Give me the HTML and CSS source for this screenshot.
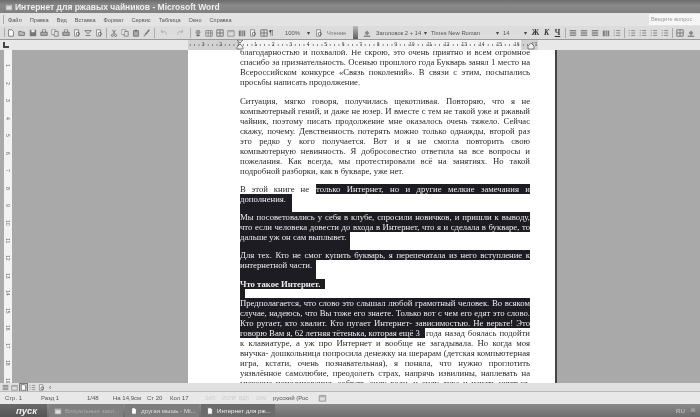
FILE: index.html
```html
<!DOCTYPE html>
<html lang="ru">
<head>
<meta charset="utf-8">
<title>Интернет для ржавых чайников - Microsoft Word</title>
<link rel="stylesheet" href="styles.css">
</head>
<body>

<svg class="defs" width="0" height="0">
  <symbol id="i-new" viewBox="0 0 10 10"><path d="M2 1h4l2 2v6H2z" fill="#fff" stroke="#666"/></symbol>
  <symbol id="i-open" viewBox="0 0 10 10"><path d="M1 8V3h3l1 1h3v4z" fill="#bbb" stroke="#666"/></symbol>
  <symbol id="i-save" viewBox="0 0 10 10"><path d="M1 1h8v8H1z" fill="#777"/><path d="M3 1h4v3H3z" fill="#eee"/></symbol>
  <symbol id="i-print" viewBox="0 0 10 10"><path d="M3 1h4v3H3z" fill="#fff" stroke="#777"/><path d="M1 4h8v4H1z" fill="#aaa" stroke="#666"/></symbol>
  <symbol id="i-view" viewBox="0 0 10 10"><path d="M2 1h5v8H2z" fill="#fff" stroke="#777"/><circle cx="6" cy="6" r="2" fill="none" stroke="#555"/></symbol>
  <symbol id="i-spell" viewBox="0 0 10 10"><path d="M1 2h8L5 6z" fill="none" stroke="#666"/><path d="M2 8h6" stroke="#666"/></symbol>
  <symbol id="i-cut" viewBox="0 0 10 10"><path d="M3 1l3 5M7 1L4 6" stroke="#666" fill="none"/><circle cx="3" cy="8" r="1.3" fill="none" stroke="#666"/><circle cx="7" cy="8" r="1.3" fill="none" stroke="#666"/></symbol>
  <symbol id="i-copy" viewBox="0 0 10 10"><path d="M1 1h5v6H1z" fill="#fff" stroke="#888"/><path d="M4 3h5v6H4z" fill="#ddd" stroke="#777"/></symbol>
  <symbol id="i-paste" viewBox="0 0 10 10"><path d="M2 2h6v7H2z" fill="#aaa" stroke="#666"/><path d="M4 1h2v2H4z" fill="#666"/></symbol>
  <symbol id="i-brush" viewBox="0 0 10 10"><path d="M8 1L3 7" stroke="#777" stroke-width="2"/><path d="M1 9l2-2" stroke="#999" stroke-width="2"/></symbol>
  <symbol id="i-undo" viewBox="0 0 10 10"><path d="M8 7C8 3 5 2 2 4M2 1v3h3" fill="none" stroke="#aaa"/></symbol>
  <symbol id="i-redo" viewBox="0 0 10 10"><path d="M2 7c0-4 3-5 6-3M8 1v3H5" fill="none" stroke="#aaa"/></symbol>
  <symbol id="i-link" viewBox="0 0 10 10"><circle cx="5" cy="4" r="3" fill="#999"/><path d="M3 8h4" stroke="#666" stroke-width="2"/></symbol>
  <symbol id="i-table" viewBox="0 0 10 10"><path d="M1 2h8v7H1zM1 5h8M4 2v7M7 2v7" fill="#eee" stroke="#777"/></symbol>
  <symbol id="i-cols" viewBox="0 0 10 10"><path d="M1 2h8v7H1z" fill="#777"/><path d="M4 2v7M6.500 2v7" stroke="#ddd"/></symbol>
  <symbol id="i-lines" viewBox="0 0 10 10"><path d="M1 2h8M1 4h8M1 6h8M1 8h8" stroke="#666"/></symbol>
  <symbol id="i-list" viewBox="0 0 10 10"><path d="M1 2h1M1 5h1M1 8h1" stroke="#555"/><path d="M4 2h5M4 5h5M4 8h5" stroke="#777"/></symbol>
  <symbol id="i-box" viewBox="0 0 10 10"><path d="M1 1h8v8H1zM1 5h8M5 1v8" fill="none" stroke="#666"/></symbol>
  <symbol id="i-fill" viewBox="0 0 10 10"><path d="M2 5l3-3 3 3-3 3z" fill="#888"/><path d="M1 9h8" stroke="#444"/></symbol>
  <symbol id="i-win" viewBox="0 0 10 10"><path d="M1 2h8v7H1z" fill="#ddd" stroke="#888"/><path d="M2 3h6v1H2z" fill="#999"/></symbol>
  <symbol id="i-indent" viewBox="0 0 8 10"><path d="M1 0l3 3 3-3zM4 4L1 7v2h6V7z" fill="#eee" stroke="#555" stroke-width=".7"/></symbol>
  <symbol id="i-rindent" viewBox="0 0 8 10"><path d="M4 3L1 6v3h6V6z" fill="#eee" stroke="#555" stroke-width=".7"/></symbol>
</svg>

<div class="app">

  <div class="titlebar">
    <svg class="tb-icon"><use href="#i-win"/></svg>
    <span>Интернет для ржавых чайников - Microsoft Word</span>
  </div>

  <div class="menubar">
    <div class="grip"></div>
    <span>Файл</span><span>Правка</span><span>Вид</span><span>Вставка</span><span>Формат</span><span>Сервис</span><span>Таблица</span><span>Окно</span><span>Справка</span>
    <div class="ask">Введите вопрос</div>
  </div>

  <div class="toolbar">
    <div class="grip"></div>
    <svg class="ic"><use href="#i-new"/></svg>
    <svg class="ic"><use href="#i-open"/></svg>
    <svg class="ic"><use href="#i-save"/></svg>
    <svg class="ic"><use href="#i-print"/></svg>
    <svg class="ic"><use href="#i-copy"/></svg>
    <svg class="ic"><use href="#i-print"/></svg>
    <svg class="ic"><use href="#i-view"/></svg>
    <svg class="ic"><use href="#i-spell"/></svg>
    <svg class="ic"><use href="#i-view"/></svg>
    <i class="sep"></i>
    <svg class="ic"><use href="#i-cut"/></svg>
    <svg class="ic"><use href="#i-copy"/></svg>
    <svg class="ic"><use href="#i-paste"/></svg>
    <svg class="ic"><use href="#i-brush"/></svg>
    <i class="sep"></i>
    <svg class="ic wide"><use href="#i-undo"/></svg>
    <svg class="ic wide"><use href="#i-redo"/></svg>
    <i class="sep"></i>
    <svg class="ic"><use href="#i-link"/></svg>
    <svg class="ic"><use href="#i-table"/></svg>
    <svg class="ic"><use href="#i-box"/></svg>
    <svg class="ic"><use href="#i-win"/></svg>
    <svg class="ic"><use href="#i-cols"/></svg>
    <svg class="ic"><use href="#i-view"/></svg>
    <svg class="ic"><use href="#i-box"/></svg>
    <span class="mark">¶</span>
    <span class="combo zoom">100%</span>
    <span class="arrow">▾</span>
    <svg class="ic"><use href="#i-view"/></svg>
    <span class="read">Чтение</span>
    <div class="handle"></div>
    <svg class="ic"><use href="#i-fill"/></svg>
    <span class="combo style">Заголовок 2 + 14</span>
    <span class="arrow">▾</span>
    <span class="combo font">Times New Roman</span>
    <span class="arrow">▾</span>
    <span class="combo size">14</span>
    <span class="arrow">▾</span>
    <b class="fmt">Ж</b><b class="fmt it">К</b><b class="fmt un">Ч</b>
    <i class="sep"></i>
    <svg class="ic"><use href="#i-lines"/></svg>
    <svg class="ic"><use href="#i-lines"/></svg>
    <svg class="ic"><use href="#i-lines"/></svg>
    <svg class="ic"><use href="#i-cols"/></svg>
    <svg class="ic"><use href="#i-list"/></svg>
    <i class="sep"></i>
    <svg class="ic"><use href="#i-list"/></svg>
    <svg class="ic"><use href="#i-list"/></svg>
    <svg class="ic"><use href="#i-list"/></svg>
    <svg class="ic"><use href="#i-list"/></svg>
    <i class="sep"></i>
    <svg class="ic"><use href="#i-box"/></svg>
    <svg class="ic"><use href="#i-fill"/></svg>
  </div>

  <div class="hruler-row">
    <div class="corner"></div>
    <div class="hruler">
      <span>3</span><span>2</span><span>1</span><span class="on">1</span><span class="on">2</span><span class="on">3</span><span class="on">4</span><span class="on">5</span><span class="on">6</span><span class="on">7</span><span class="on">8</span><span class="on">9</span><span class="on">10</span><span class="on">11</span><span class="on">12</span><span class="on">13</span><span class="on">14</span><span class="on">15</span><span class="on">16</span><span>17</span>
      <svg class="indent left"><use href="#i-indent"/></svg>
      <svg class="indent right"><use href="#i-rindent"/></svg>
    </div>
  </div>

  <div class="workspace">
    <div class="vruler">
      <span>1</span><span>2</span><span>3</span><span>4</span><span>5</span><span>6</span><span>7</span><span>8</span><span>9</span><span>10</span><span>11</span><span>12</span><span>13</span><span>14</span><span>15</span><span>16</span><span>17</span><span>18</span><span>19</span>
    </div>
    <div class="page">
      <div class="text">
        <div class="ln"><span class="j">благодарностью и похвалой. Не скрою, это очень приятно и всем огромное</span></div>
        <div class="ln"><span class="j">спасибо за признательность. Осенью прошлого года Букварь занял 1 место на</span></div>
        <div class="ln"><span class="j">Всероссийском конкурсе «Связь поколений». В связи с этим, посыпались</span></div>
        <div class="ln end wide"><span>просьбы написать продолжение.</span></div>

        <div class="ln"><span class="j">Ситуация, мягко говоря, получилась щекотливая. Повторяю, что я не</span></div>
        <div class="ln"><span class="j">компьютерный гений, и даже не юзер. И вместе с тем не такой уже и ржавый</span></div>
        <div class="ln"><span class="j">чайник, поэтому писать продолжение мне оказалось очень тяжело. Сейчас</span></div>
        <div class="ln"><span class="j">скажу, почему. Девственность потерять можно только однажды, второй раз</span></div>
        <div class="ln"><span class="j">это редко у кого получается. Вот и я не смогла повторить свою</span></div>
        <div class="ln"><span class="j">компьютерную невинность. Я добросовестно ответила на все вопросы и</span></div>
        <div class="ln"><span class="j">пожелания. Как всегда, мы протестировали всё на занятиях. Но такой</span></div>
        <div class="ln end"><span>подробной разборки, как в букваре, уже нет.</span></div>

        <div class="ln"><span class="j intro">В этой книге не</span><span class="j sel">только Интернет, но и другие мелкие замечания и</span></div>
        <div class="ln end"><span class="sel w-a">дополнения.</span></div>

        <div class="ln"><span class="j sel">Мы посоветовались у себя в клубе, спросили новичков, и пришли к выводу,</span></div>
        <div class="ln"><span class="j sel">что если человека довести до входа в Интернет, что я и сделала в букваре, то</span></div>
        <div class="ln end"><span class="sel w-b">дальше уж он сам выплывет.</span></div>

        <div class="ln"><span class="j sel">Для тех. Кто не смог купить букварь, я перепечатала из него вступление к</span></div>
        <div class="ln end wide"><span class="sel w-c">интернетной части.</span></div>

        <div class="ln"><strong class="sel w-d">Что такое Интернет.</strong></div>
        <div class="ln gap"><span class="sel w-e"></span></div>

        <div class="ln"><span class="j sel">Предполагается, что слово это слышал любой грамотный человек. Во всяком</span></div>
        <div class="ln"><span class="j sel">случае, надеюсь, что Вы тоже его знаете. Только вот с чем его едят это слово.</span></div>
        <div class="ln"><span class="j sel">Кто ругает, кто хвалит. Кто пугает Интернет- зависимостью. Не верьте! Это</span></div>
        <div class="ln"><span class="sel w-f">говорю Вам я, 62 летняя тётенька, которая ещё 3</span><span class="j tail">года назад боялась подойти</span></div>
        <div class="ln"><span class="j">к клавиатуре, а уж про Интернет и вообще не загадывала. Но когда моя</span></div>
        <div class="ln"><span class="j">внучка- дошкольница попросила денежку на шерарам (детская компьютерная</span></div>
        <div class="ln"><span class="j">игра, кстати, очень познавательная), я поняла, что нужно проглотить</span></div>
        <div class="ln"><span class="j">уязвлённое самолюбие, преодолеть страх, напрячь извилины, наплевать на</span></div>
        <div class="ln"><span class="j">мужские поползновения, собрать силу воли, и силу духа и начать учиться.</span></div>
      </div>
    </div>
  </div>

  <div class="viewbar">
    <svg class="vw"><use href="#i-lines"/></svg>
    <svg class="vw"><use href="#i-win"/></svg>
    <svg class="vw on"><use href="#i-new"/></svg>
    <svg class="vw"><use href="#i-list"/></svg>
    <svg class="vw"><use href="#i-view"/></svg>
    <span class="hscroll">‹</span>
  </div>

  <div class="statusbar">
    <span class="s1">Стр. 1</span>
    <span class="s2">Разд 1</span>
    <span class="s3">1/48</span>
    <span class="s4">На 14,9см</span>
    <span class="s5">Ст 20</span>
    <span class="s6">Кол 17</span>
    <span class="s7">ЗАП</span><span class="s7">ИСПР</span><span class="s7">ВДЛ</span><span class="s7">ЗАМ</span>
    <span class="s8">русский (Рос</span>
    <svg class="book"><use href="#i-win"/></svg>
  </div>

  <div class="taskbar">
    <div class="start">пуск</div>
    <div class="task dim"><svg class="tk"><use href="#i-win"/></svg><span>Визуальные закл...</span></div>
    <div class="task"><svg class="tk"><use href="#i-new"/></svg><span>другая мышь - Mi...</span></div>
    <div class="task cur"><svg class="tk"><use href="#i-new"/></svg><span>Интернет для рж...</span></div>
    <div class="tray"><span>RU</span><svg class="tk"><use href="#i-link"/></svg></div>
  </div>

</div>

</body>
</html>
```

FILE: styles.css
```css
html, body {
  margin: 0;
  padding: 0;
  background: #777;
}

.defs {
  position: absolute;
}

.app {
  width: 700px;
  height: 417px;
  overflow: hidden;
  display: flex;
  flex-direction: column;
  font-family: "Liberation Sans", Arial, sans-serif;
  color: #555;
  filter: blur(0.45px);
}

/* title */
.titlebar {
  height: 13px;
  flex: none;
  display: flex;
  align-items: center;
  gap: 2px;
  padding-left: 5px;
  background: linear-gradient(#6c6c6c, #8a8a8a 40%, #7f7f7f);
  color: #eee;
  font-weight: bold;
  font-size: 8.5px;
}
.tb-icon {
  width: 8px;
  height: 8px;
}

/* menu */
.menubar {
  height: 13px;
  flex: none;
  display: flex;
  align-items: center;
  gap: 8px;
  padding-left: 3px;
  background: #e3e3e3;
  font-size: 5.6px;
}
.menubar .grip {
  margin-right: -4px;
}
.grip {
  width: 1px;
  height: 9px;
  background: #aaa;
}
.ask {
  margin-left: auto;
  width: 49px;
  height: 11px;
  padding-left: 2px;
  background: #f6f6f6;
  color: #999;
  line-height: 11px;
}

/* toolbar */
.toolbar {
  height: 14px;
  flex: none;
  display: flex;
  align-items: center;
  padding-left: 4px;
  background: #dcdcdc;
  border-bottom: 1px solid #999;
  box-sizing: border-box;
  font-size: 5.800px;
  white-space: nowrap;
  overflow: hidden;
}
.ic {
  width: 8px;
  height: 8px;
  margin: 0 1.5px;
  flex: none;
}
.ic.wide {
  margin: 0 4px;
}
.sep {
  width: 1px;
  height: 10px;
  margin: 0 1.5px;
  background: #aaa;
  flex: none;
}
.mark {
  width: 11px;
  font-size: 8px;
  color: #444;
  flex: none;
}
.combo {
  color: #555;
  flex: none;
}
.zoom { width: 22px; margin-left: 5px; }
.style { width: 48px; margin-left: 4px; }
.font { width: 65px; margin-left: 1px; }
.size { width: 21px; margin-left: 1px; }
.arrow {
  width: 6px;
  color: #444;
  flex: none;
}
.read {
  width: 24px;
  margin-left: 3px;
  color: #777;
  flex: none;
}
.handle {
  width: 5px;
  height: 14px;
  margin: 0 3px 0 2px;
  background: linear-gradient(#bbb, #555);
  flex: none;
}
.fmt {
  width: 11px;
  flex: none;
  text-align: center;
  font-family: "Liberation Serif", serif;
  font-size: 7.5px;
  color: #333;
}
.it { font-style: italic; }
.un { text-decoration: underline; }

/* rulers */
.hruler-row {
  height: 10px;
  flex: none;
  display: flex;
  background: #e8e8e8;
}
.corner {
  width: 6px;
  height: 6px;
  margin: 2px 0 0 3px;
  border-left: 2px solid #444;
  border-bottom: 2px solid #444;
  box-sizing: border-box;
}
.hruler {
  position: relative;
  margin-left: 179px;
  display: flex;
  font-size: 5px;
  line-height: 9px;
  color: #555;
  background: #d2d2d2;
}
.hruler span {
  width: 17.5px;
  text-align: right;
  padding-right: 1px;
  box-sizing: border-box;
  background: radial-gradient(circle, #777 0.5px, transparent 1px) 0 50% / 4.4px 4px repeat-x;
}
.hruler .on {
  background-color: #f4f4f4;
}
.indent {
  position: absolute;
  top: 0;
  width: 8px;
  height: 10px;
}
.indent.left { left: 48px; }
.indent.right { left: 339px; }

.workspace {
  flex: 1;
  min-height: 0;
  display: flex;
  background: #a9a9a9;
  overflow: hidden;
}
.vruler {
  width: 8px;
  margin: 0 176px 0 4px;
  flex: none;
  display: flex;
  flex-direction: column;
  padding-top: 7px;
  background: #f2f2f2;
  font-size: 5px;
  color: #666;
  overflow: hidden;
}
.vruler span {
  height: 17.5px;
  flex: none;
  display: flex;
  align-items: center;
  justify-content: center;
  writing-mode: vertical-rl;
}

/* page */
.page {
  width: 367px;
  flex: none;
  background: #fff;
  border-right: 2px solid #444;
  overflow: hidden;
}
.text {
  margin: -3px 0 0 52px;
  width: 290px;
  font-family: "Liberation Serif", "Times New Roman", serif;
  font-size: 8.7px;
  line-height: 10px;
  color: #2a2a2a;
}
.ln {
  display: flex;
  min-height: 10px;
  white-space: nowrap;
}
.end { min-height: 18px; }
.end.wide { min-height: 19px; }
.gap { min-height: 9px; }
.j {
  flex: 1;
  min-width: 0;
  white-space: normal;
  text-align: justify;
  text-align-last: justify;
}
.sel {
  background: #1c1c22;
  color: #eee;
}
.intro { flex: none; width: 76px; padding-right: 7px; box-sizing: border-box; }
.tail { padding-left: 1px; }
.w-a { width: 52px; }
.w-b { width: 110px; }
.w-c { width: 76px; }
.w-d { width: 85px; }
.w-e { width: 5px; }
.w-f { width: 185px; }

/* bottom bars */
.viewbar {
  height: 8px;
  flex: none;
  display: flex;
  align-items: center;
  gap: 2px;
  padding-left: 2px;
  background: #e0e0e0;
  font-size: 7px;
}
.vw {
  width: 7px;
  height: 7px;
}
.vw.on {
  background: #bbb;
  outline: 1px solid #777;
}
.hscroll {
  margin-left: 2px;
}
.statusbar {
  height: 13px;
  flex: none;
  display: flex;
  align-items: center;
  padding-left: 5px;
  background: #e8e8e8;
  border-top: 1px solid #bbb;
  box-sizing: border-box;
  font-size: 6px;
  white-space: nowrap;
}
.statusbar span { flex: none; }
.s1 { width: 36px; }
.s2 { width: 46px; }
.s3 { width: 26px; }
.s4 { width: 34px; }
.s5 { width: 23px; }
.s6 { width: 35px; }
.s7 { width: 17px; color: #ccc; font-size: 5px; }
.s8 { width: 45px; }
.book { width: 9px; height: 8px; }

.taskbar {
  height: 13px;
  flex: none;
  display: flex;
  align-items: stretch;
  gap: 2px;
  background: linear-gradient(#8a8a8a, #6e6e6e);
  font-size: 6.2px;
  color: #ddd;
  white-space: nowrap;
}
.start {
  width: 47px;
  box-sizing: border-box;
  padding-left: 16px;
  background: linear-gradient(#6a6a6a, #555);
  color: #eee;
  font-size: 9.5px;
  font-weight: bold;
  font-style: italic;
  line-height: 13px;
}
.task {
  width: 74px;
  display: flex;
  align-items: center;
  gap: 3px;
  padding-left: 5px;
  box-sizing: border-box;
  background: #7c7c7c;
}
.task.dim {
  color: #aaa;
  background: #808080;
}
.task.cur {
  background: #6c6c6c;
  color: #eee;
}
.tk {
  width: 8px;
  height: 8px;
  flex: none;
}
.tray {
  margin-left: auto;
  display: flex;
  align-items: center;
  gap: 4px;
  padding-right: 3px;
  color: #ccc;
}
```
